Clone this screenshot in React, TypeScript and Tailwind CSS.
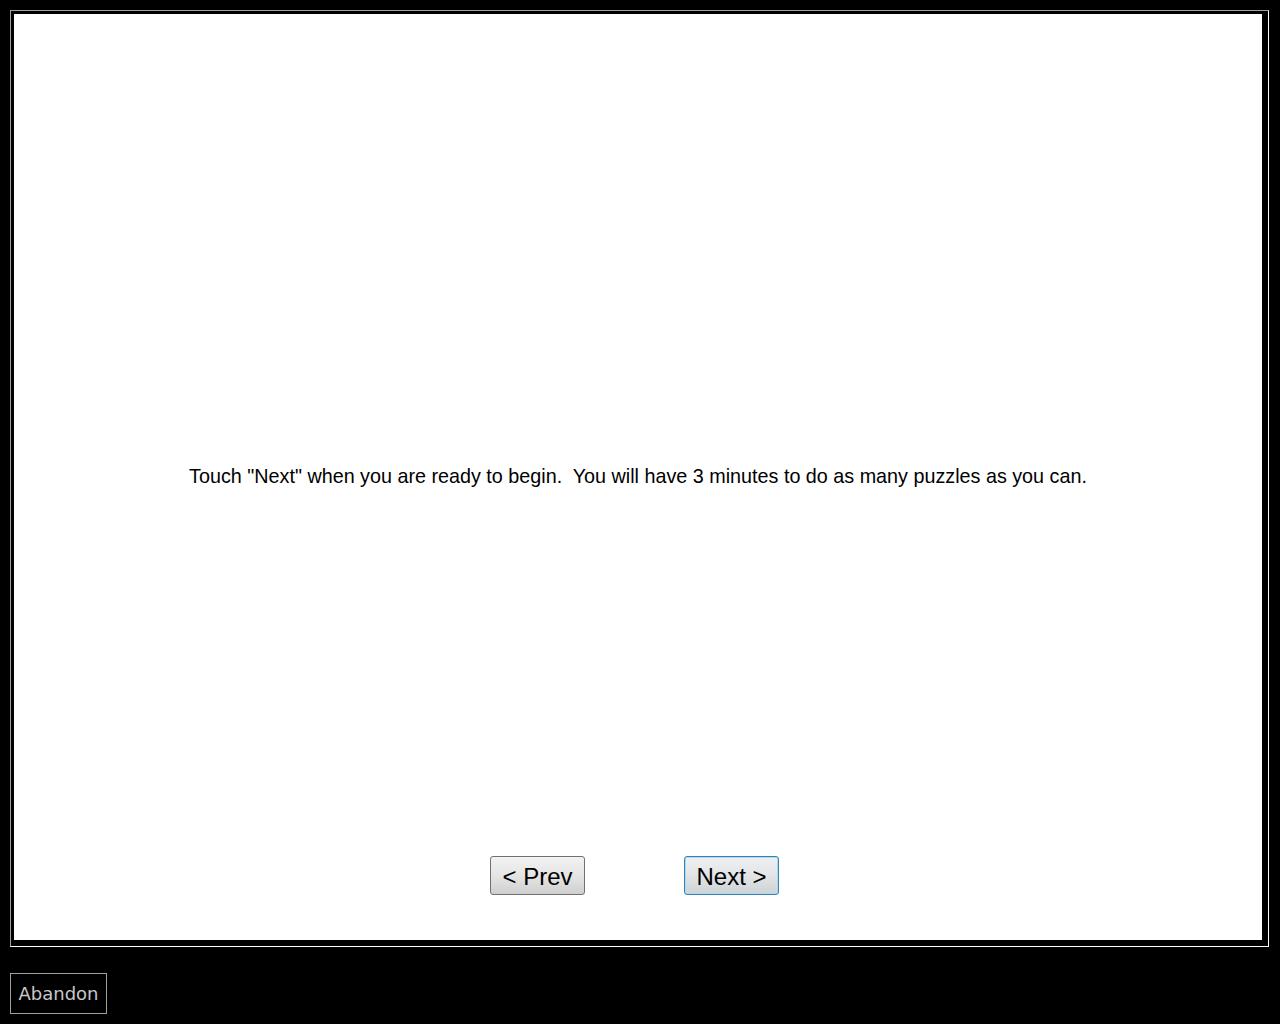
export default function App() {
  return (
    <div className="w-[1280px] h-[1024px] bg-black flex flex-col pt-[10px] pl-[10px] font-['Liberation_Sans',Arial,sans-serif]">
      <div className="w-[1259px] h-[937px] border-t border-l border-t-[#a0a0a0] border-l-[#a0a0a0] border-b border-r border-b-white border-r-white pt-[3px] pl-[3px] pr-[6px] pb-[6px]">
        <div className="w-[1248px] h-[926px] bg-white flex flex-col">
          <div className="flex-1 flex items-center justify-center pt-[82px]">
            <p className="text-[19.75px] leading-[24px] text-black whitespace-pre">
              Touch "Next" when you are ready to begin.  You will have 3 minutes to do as many puzzles as you can.
            </p>
          </div>
          <div className="flex justify-center gap-[99px] pr-[7px] pb-[45px]">
            <button
              type="button"
              className="w-[95px] h-[39px] pt-[2px] rounded-[3px] border border-[#707070] bg-gradient-to-b from-[#f2f2f2] via-[#e5e5e5] to-[#cfcfcf] text-[24px] leading-none text-black"
            >
              &lt; Prev
            </button>
            <button
              type="button"
              className="w-[95px] h-[39px] pt-[2px] rounded-[3px] border border-[#3c7fb1] bg-gradient-to-b from-[#eef0f2] via-[#e2e4e6] to-[#cfd3d6] shadow-[inset_0_0_0_1px_#a8dcf5] text-[24px] leading-none text-black"
            >
              Next &gt;
            </button>
          </div>
        </div>
      </div>
      <div className="mt-[26px]">
        <button
          type="button"
          className="w-[97px] h-[41px] border border-[#a0a0a0] bg-black text-[#c8c8c8] text-[18px] font-['DejaVu_Sans',sans-serif]"
        >
          Abandon
        </button>
      </div>
    </div>
  );
}
